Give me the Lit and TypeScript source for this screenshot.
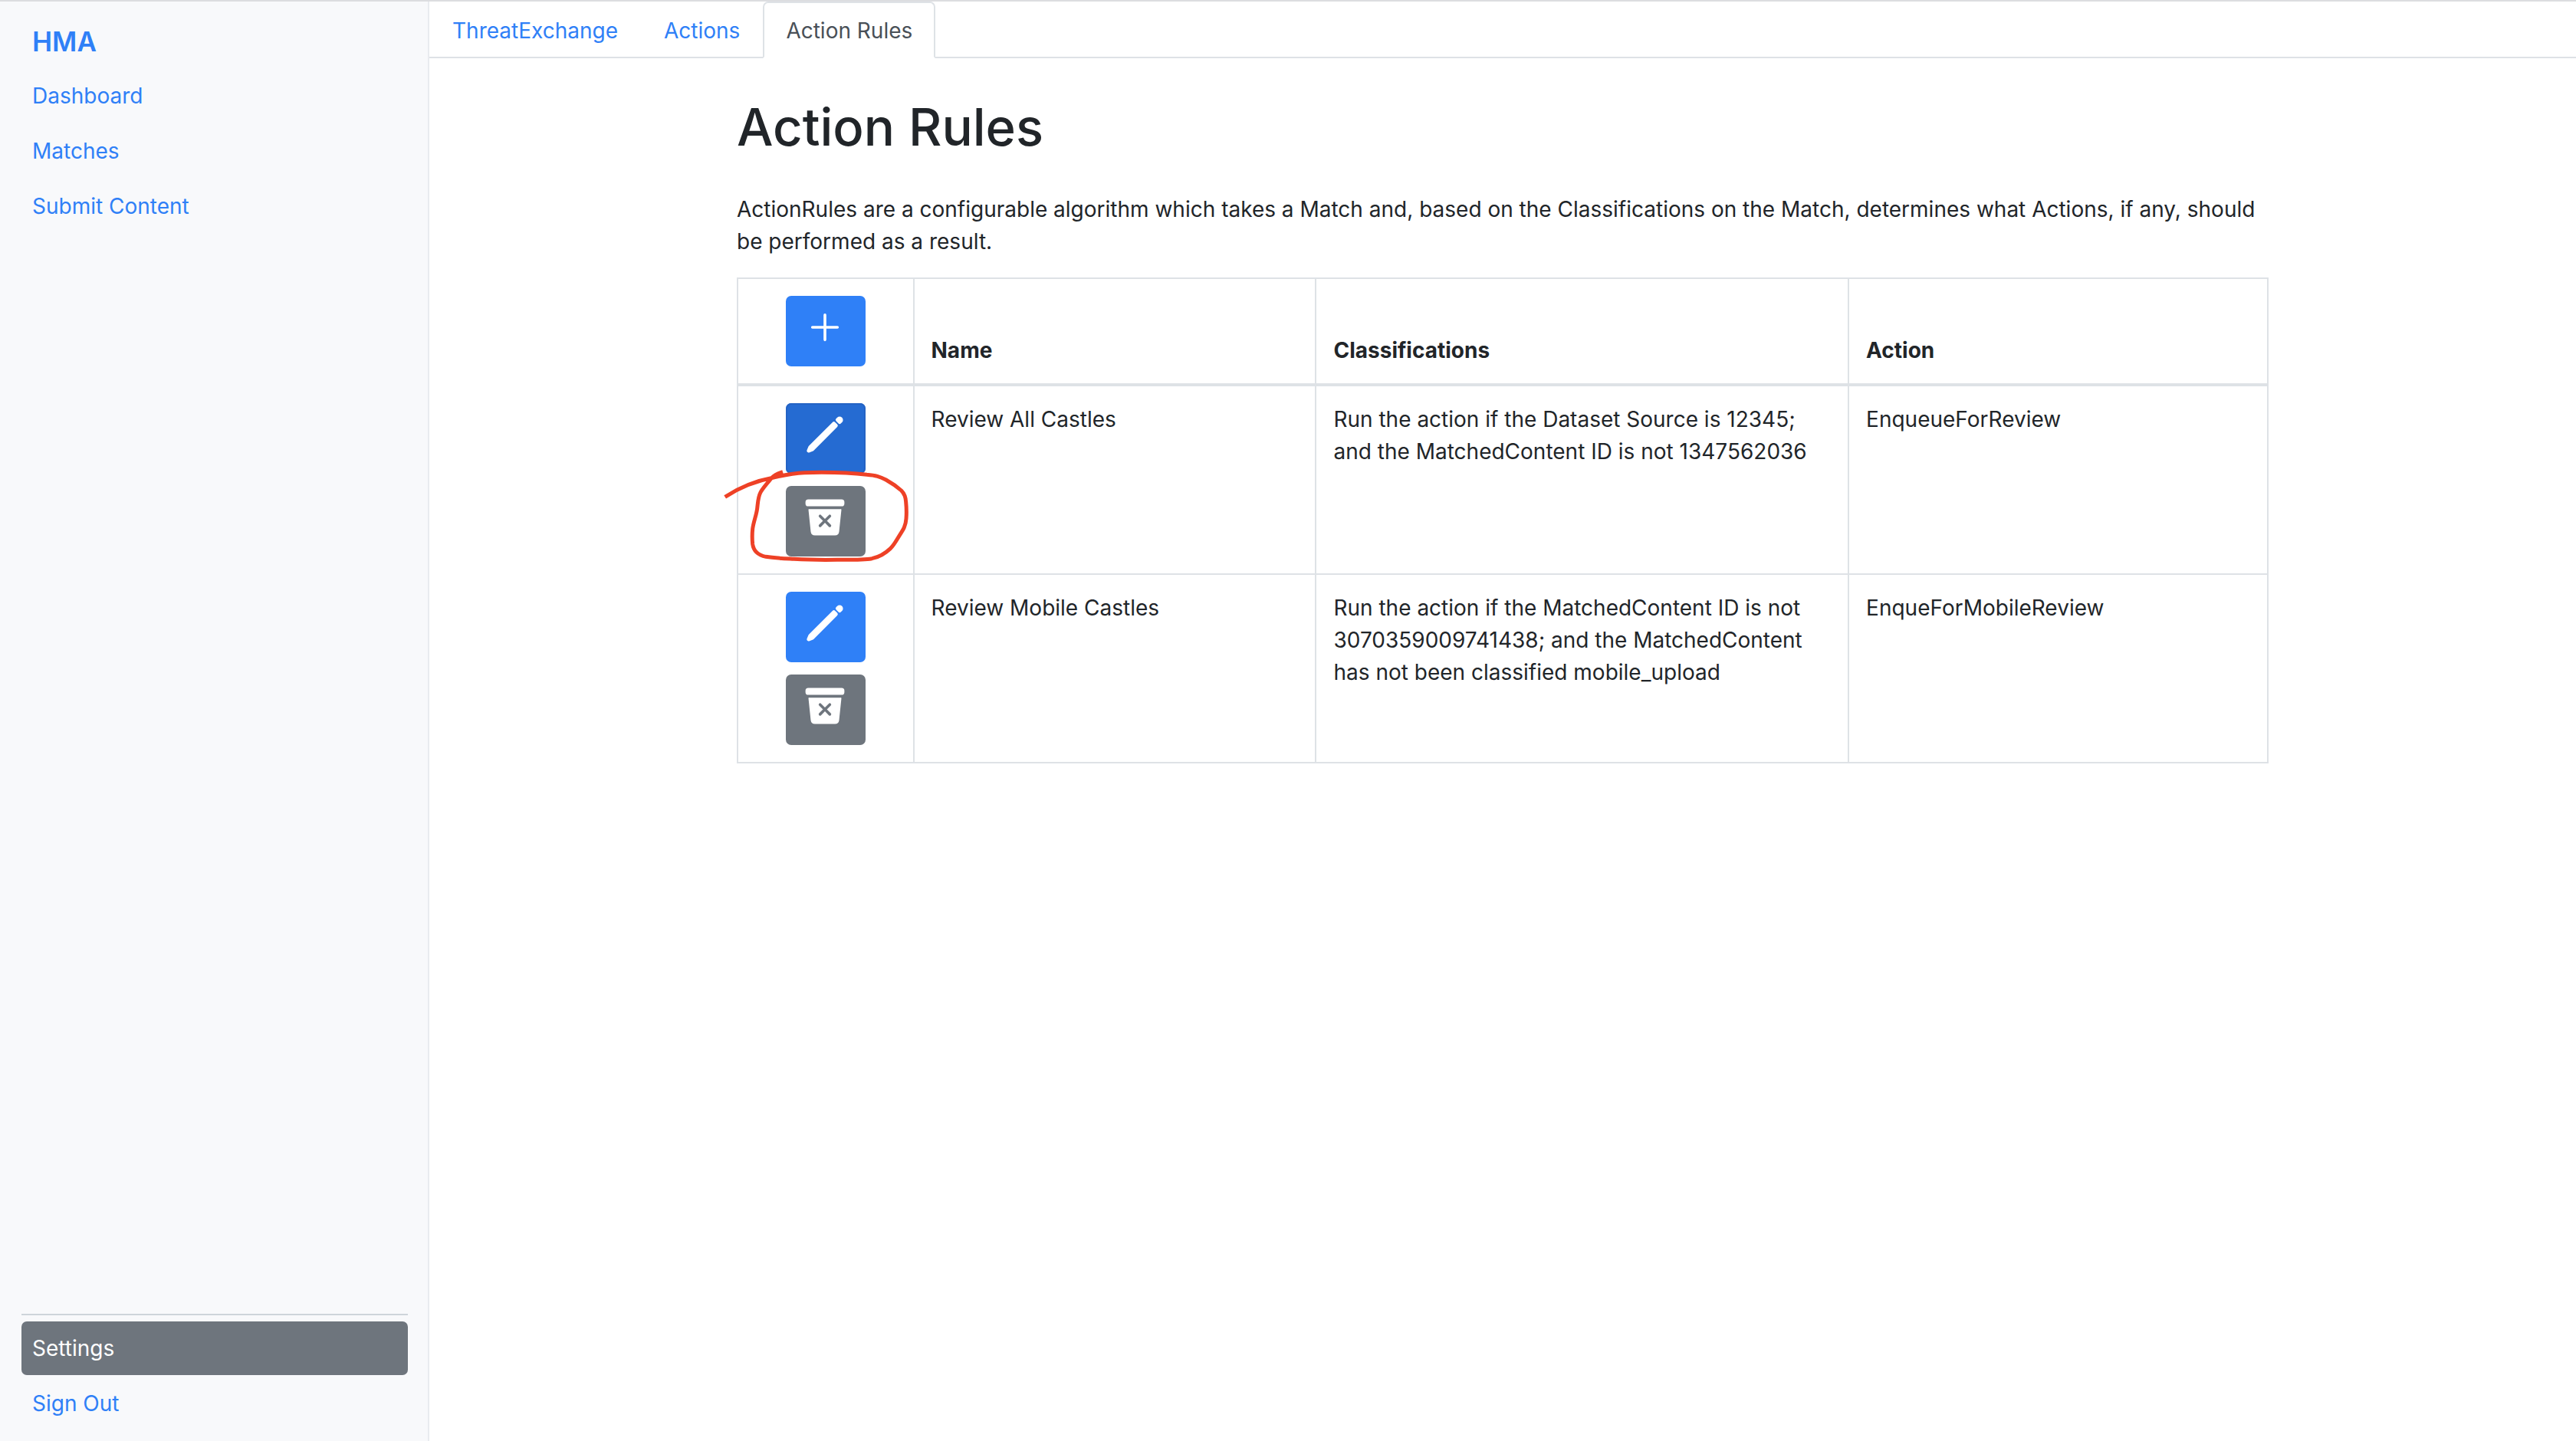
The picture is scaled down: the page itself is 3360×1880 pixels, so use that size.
import { LitElement, html, css, svg, nothing } from "lit";
import { customElement, property } from "lit/decorators.js";

type IconName = "add" | "pencil" | "bin";

const icons = {
  add: svg`<path d="M256 112v288M400 256H112" fill="none" stroke="currentColor" stroke-width="32" stroke-linecap="round" stroke-linejoin="round"/>`,
  pencil: svg`<path d="M358.62 129.28L86.49 402.08 70 442l39.92-16.49 272.13-272.8-23.43-23.43zM413.07 74.84l-11.79 11.78 24.1 24.1 11.79-11.79a16.51 16.51 0 000-23.34l-.75-.75a16.51 16.51 0 00-23.35 0z" fill="currentColor" stroke="currentColor" stroke-width="44" stroke-linecap="round" stroke-linejoin="round"/>`,
  bin: svg`<rect x="32" y="48" width="448" height="80" rx="32" fill="currentColor"/><path fill="currentColor" d="M74.45 160a8 8 0 00-8 8.83l26.31 252.56a1.5 1.5 0 000 .22A48 48 0 00140.45 464h231.09a48 48 0 0047.67-42.39v-.21l26.27-252.57a8 8 0 00-8-8.83zm248.86 180.69a16 16 0 11-22.63 22.62L256 318.63l-44.69 44.68a16 16 0 01-22.63-22.62L233.37 296l-44.69-44.69a16 16 0 0122.63-22.62L256 273.37l44.68-44.68a16 16 0 0122.63 22.62L278.62 296z"/>`,
};

interface Rule {
  name: string;
  classifications: string;
  action: string;
  editing?: boolean;
  marked?: boolean;
}

const rules: Rule[] = [
  {
    name: "Review All Castles",
    classifications:
      "Run the action if the Dataset Source is 12345; and the MatchedContent ID is not 1347562036",
    action: "EnqueueForReview",
    editing: true,
    marked: true,
  },
  {
    name: "Review Mobile Castles",
    classifications:
      "Run the action if the MatchedContent ID is not 3070359009741438; and the MatchedContent has not been classified mobile_upload",
    action: "EnqueForMobileReview",
  },
];

@customElement("icon-button")
export class IconButton extends LitElement {
  @property() icon: IconName = "add";
  @property() label = "";
  @property() variant = "primary";

  static styles = css`
    :host {
      display: block;
    }
    .btn {
      display: block;
      margin: 0;
      padding: 12px 24px 22px 22px;
      border: 0;
      border-radius: 7px;
      color: #fff;
      background: #2f80f7;
      cursor: pointer;
    }
    .pressed {
      background: #256bd2;
      box-shadow: inset 0 0 0 2px #2463c4;
    }
    .secondary {
      background: #6e757d;
    }
    .icon {
      display: block;
      width: 58px;
      height: 58px;
    }
  `;

  render() {
    return html`<button class="btn ${this.variant}" type="button" aria-label=${this.label}>
      <svg class="icon" viewBox="0 0 512 512" aria-hidden="true">${icons[this.icon]}</svg>
    </button>`;
  }
}

@customElement("side-bar")
export class SideBar extends LitElement {
  static styles = css`
    :host {
      display: flex;
      flex-direction: column;
      box-sizing: border-box;
      padding: 16px 26px 14px 28px;
      background: #f8f9fb;
      border-right: 2px solid #e9ebef;
    }
    .brand {
      padding: 10px 14px;
      font-size: 35px;
      line-height: 52px;
      font-weight: 600;
      color: #2f80f7;
      text-decoration: none;
    }
    .list {
      display: flex;
      flex-direction: column;
      gap: 2px;
    }
    .bottom {
      margin-top: auto;
      padding-top: 8px;
      border-top: 2px solid #ced4da;
    }
    .link {
      padding: 14px;
      border-radius: 7px;
      color: #2f80f7;
      text-decoration: none;
    }
    .active {
      color: #fff;
      background: #6e757d;
    }
  `;

  render() {
    return html`
      <a class="brand" href="#home">HMA</a>
      <nav class="list">
        <a class="link" href="#dashboard">Dashboard</a>
        <a class="link" href="#matches">Matches</a>
        <a class="link" href="#submit">Submit Content</a>
      </nav>
      <nav class="list bottom">
        <a class="link active" href="#settings">Settings</a>
        <a class="link" href="#signout">Sign Out</a>
      </nav>
    `;
  }
}

@customElement("rules-table")
export class RulesTable extends LitElement {
  static styles = css`
    :host {
      display: block;
    }
    .table {
      width: 100%;
      table-layout: fixed;
      border-collapse: collapse;
    }
    .tools {
      width: 11.5%;
    }
    .name {
      width: 26.3%;
    }
    .classes {
      width: 34.8%;
    }
    .head,
    .cell {
      padding: 22px;
      border: 2px solid #dee2e6;
      text-align: left;
      vertical-align: top;
    }
    .head {
      font-weight: 700;
      vertical-align: bottom;
      border-bottom-width: 4px;
    }
    .stack {
      display: flex;
      flex-direction: column;
      align-items: center;
      gap: 16px;
    }
    .spot {
      position: relative;
    }
    .mark {
      position: absolute;
      left: -106px;
      top: -34px;
      width: 320px;
      height: 147px;
      pointer-events: none;
    }
  `;

  private renderMark() {
    return html`<svg class="mark" viewBox="0 780 960 441" aria-hidden="true">
      <path
        d="M80 925C130 892 200 862 270 849C310 840 340 832 390 830C470 828 560 829 635 838C670 841 685 845 710 858C735 872 752 884 770 900C782 912 787 924 788 945C790 965 791 985 789 1010C787 1038 778 1052 765 1072C752 1092 744 1110 728 1126C705 1148 685 1160 655 1166C620 1172 570 1171 520 1171C460 1172 400 1171 350 1168C310 1166 275 1165 240 1159C210 1153 192 1138 188 1110C186 1090 186 1070 188 1050C192 1020 202 1000 206 970C209 945 209 925 220 905C232 885 250 866 264 849C276 837 290 832 306 827"
        fill="none"
        stroke="#ee4126"
        stroke-width="15"
        stroke-linejoin="round"
      />
    </svg>`;
  }

  render() {
    return html`<table class="table">
      <colgroup>
        <col class="tools" />
        <col class="name" />
        <col class="classes" />
        <col />
      </colgroup>
      <thead>
        <tr>
          <th class="head">
            <div class="stack"><icon-button icon="add" label="Add rule"></icon-button></div>
          </th>
          <th class="head">Name</th>
          <th class="head">Classifications</th>
          <th class="head">Action</th>
        </tr>
      </thead>
      <tbody>
        ${rules.map(
          (rule) => html`<tr>
            <td class="cell">
              <div class="stack">
                <icon-button
                  icon="pencil"
                  label="Edit rule"
                  variant=${rule.editing ? "pressed" : "primary"}
                ></icon-button>
                <div class="spot">
                  <icon-button icon="bin" label="Delete rule" variant="secondary"></icon-button>
                  ${rule.marked ? this.renderMark() : nothing}
                </div>
              </div>
            </td>
            <td class="cell">${rule.name}</td>
            <td class="cell">${rule.classifications}</td>
            <td class="cell">${rule.action}</td>
          </tr>`
        )}
      </tbody>
    </table>`;
  }
}

@customElement("app-root")
export class AppRoot extends LitElement {
  static styles = css`
    :host {
      display: grid;
      grid-template-columns: 1fr 5fr;
      box-sizing: border-box;
      min-height: 100vh;
      border-top: 2px solid #dcdde0;
      background: #fff;
      color: #212529;
      font-family: Inter, "Liberation Sans", sans-serif;
      font-size: 28px;
      line-height: 42px;
    }
    .tabs {
      display: flex;
      border-bottom: 2px solid #dee2e6;
    }
    .tab {
      margin-bottom: -2px;
      padding: 15px 28px 13px;
      border: 2px solid transparent;
      border-radius: 7px 7px 0 0;
      color: #2f80f7;
      text-decoration: none;
    }
    .current {
      color: #495057;
      border-color: #dee2e6 #dee2e6 #fff;
      background: #fff;
    }
    .content {
      max-width: 1998px;
      margin: 0 auto;
      padding: 48px 28px 0;
    }
    .title {
      margin: 0 0 44px;
      font-size: 67px;
      line-height: 84px;
      font-weight: 500;
    }
    .intro {
      margin: 0 0 26px;
    }
  `;

  render() {
    return html`
      <side-bar></side-bar>
      <main>
        <nav class="tabs">
          <a class="tab" href="#threatexchange">ThreatExchange</a>
          <a class="tab" href="#actions">Actions</a>
          <a class="tab current" href="#rules" aria-current="page">Action Rules</a>
        </nav>
        <section class="content">
          <h1 class="title">Action Rules</h1>
          <p class="intro">
            ActionRules are a configurable algorithm which takes a Match and, based on the
            Classifications on the Match, determines what Actions, if any, should be performed as a
            result.
          </p>
          <rules-table></rules-table>
        </section>
      </main>
    `;
  }
}
